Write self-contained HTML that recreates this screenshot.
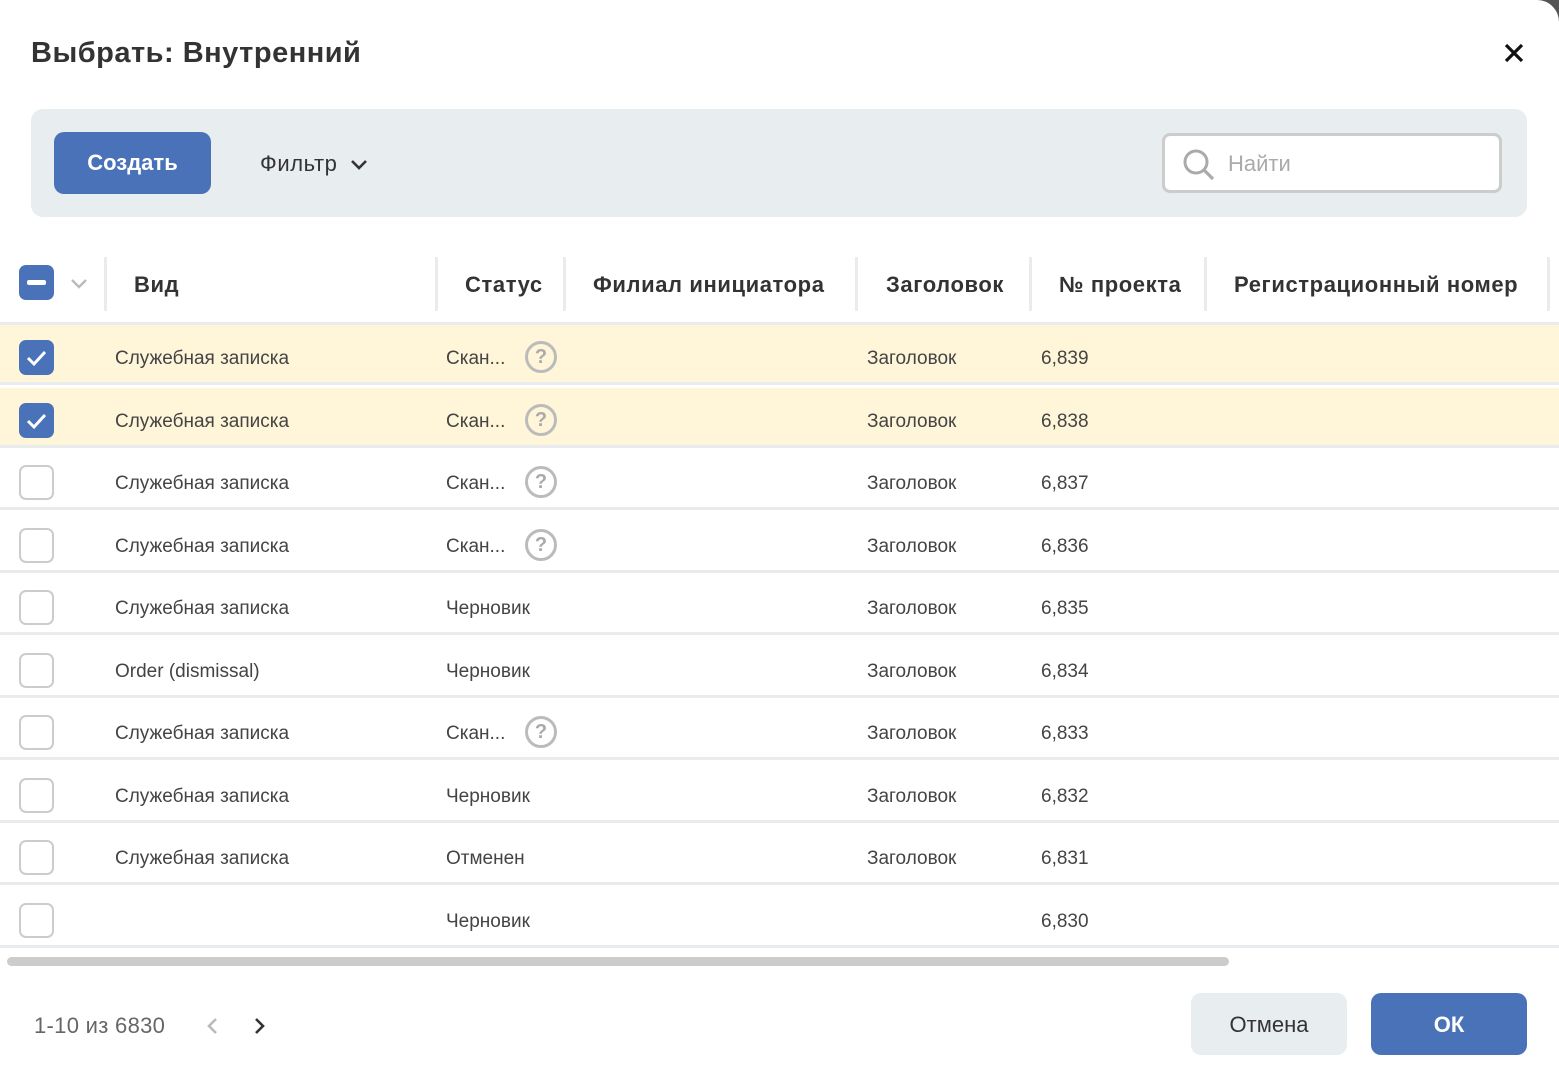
<!DOCTYPE html>
<html><head><meta charset="utf-8"><style>
*{box-sizing:border-box;margin:0;padding:0}
html,body{width:1559px;height:1083px;overflow:hidden;background:#555}
body{font-family:"Liberation Sans",sans-serif;color:#333}
.m{position:absolute;left:0;top:0;width:1559px;height:1083px;background:#fff;border-radius:0 22px 0 0}
.t{position:absolute;left:31px;top:37px;font-size:29px;font-weight:bold;color:#333;letter-spacing:0.5px}
.x{position:absolute;left:1503px;top:42px}
.bar{position:absolute;left:31px;top:109px;width:1496px;height:108px;background:#e8edf0;border-radius:12px}
.btn{position:absolute;left:54px;top:132px;width:157px;height:62px;background:#4a72b8;border-radius:10px;color:#fff;font-size:22px;font-weight:bold;text-align:center;line-height:62px}
.flt{position:absolute;left:260px;top:151px;font-size:22px;color:#333;letter-spacing:0.6px}
.srch{position:absolute;left:1162px;top:133px;width:340px;height:60px;border:3px solid #ccc;border-radius:8px;background:#fff}
.srch span{position:absolute;left:63px;top:15px;font-size:22px;color:#aaa}
.hd{position:absolute;top:272px;font-size:22px;font-weight:bold;color:#333;letter-spacing:0.6px}
.sep{position:absolute;top:257px;width:3px;height:54px;background:#e8ecef}
.row{position:absolute;left:0;width:1559px;height:60px;border-bottom:3px solid #e8ecef;font-size:19px;color:#444}
.row div{position:absolute;top:23px}
.sel{background:#fff5d8}
.cb{position:absolute;left:19px;top:15px!important;width:35px;height:35px;border:2px solid #ccc;border-radius:7px;background:#fff}
.cb.on{background:#4a72b8;border-color:#4a72b8}
.q{position:absolute;left:525px;top:16px!important;width:32px;height:32px;border:3px solid #bbb;border-radius:50%;color:#aaa;font-size:20px;text-align:center;line-height:27px;font-weight:bold}
.sb{position:absolute;left:7px;top:957px;width:1222px;height:9px;background:#ccc;border-radius:5px}
.pg{position:absolute;left:34px;top:1013px;font-size:22px;color:#666;letter-spacing:0.3px}
.cn{position:absolute;left:1191px;top:993px;width:156px;height:62px;background:#e8edf0;border-radius:10px;font-size:22px;text-align:center;line-height:64px;color:#333}
.ok{position:absolute;left:1371px;top:993px;width:156px;height:62px;background:#4a72b8;border-radius:10px;font-size:22px;text-align:center;line-height:64px;color:#fff;font-weight:bold}
</style></head><body><div class="m">
<div class="t">Выбрать: Внутренний</div>
<svg class="x" width="22" height="22" viewBox="0 0 22 22"><path d="M3 3L19 19M19 3L3 19" stroke="#111" stroke-width="3.2"/></svg>
<div class="bar"></div>
<div class="btn">Создать</div>
<div class="flt">Фильтр <svg width="18" height="12" viewBox="0 0 18 12" style="margin-left:6px"><path d="M2 2l7 7 7-7" stroke="#333" stroke-width="2.6" fill="none"/></svg></div>
<div class="srch"><svg style="position:absolute;left:17px;top:12px" width="34" height="34" viewBox="0 0 34 34"><circle cx="14" cy="14" r="11" stroke="#aaa" stroke-width="3" fill="none"/><path d="M22 22l9 9" stroke="#aaa" stroke-width="3.2"/></svg><span>Найти</span></div>
<div style="position:absolute;left:19px;top:265px;width:35px;height:35px;background:#4a72b8;border-radius:7px"><div style="position:absolute;left:8px;top:15px;width:19px;height:5px;background:#fff;border-radius:2px"></div></div>
<svg style="position:absolute;left:70px;top:278px" width="18" height="12" viewBox="0 0 18 12"><path d="M2 2l7 7 7-7" stroke="#bbb" stroke-width="2.4" fill="none"/></svg>
<div class="sep" style="left:104px"></div>
<div class="hd" style="left:134px">Вид</div>
<div class="sep" style="left:435px"></div>
<div class="hd" style="left:465px">Статус</div>
<div class="sep" style="left:563px"></div>
<div class="hd" style="left:593px">Филиал инициатора</div>
<div class="sep" style="left:855px"></div>
<div class="hd" style="left:886px">Заголовок</div>
<div class="sep" style="left:1029px"></div>
<div class="hd" style="left:1059px">№ проекта</div>
<div class="sep" style="left:1204px"></div>
<div class="hd" style="left:1234px">Регистрационный номер</div>
<div class="sep" style="left:1547px"></div>
<div style="position:absolute;left:0;top:322px;width:1559px;height:3px;background:#e8ecef"></div>
<div class="row sel" style="top:325px"><div class="cb on"><svg width="31" height="31" viewBox="0 0 31 31"><path d="M7 16l6 6 11-12" stroke="#fff" stroke-width="3" fill="none"/></svg></div><div style="left:115px">Служебная записка</div><div style="left:446px">Скан...</div><div class="q">?</div><div style="left:867px">Заголовок</div><div style="left:1041px">6,839</div></div>
<div class="row sel" style="top:388px"><div class="cb on"><svg width="31" height="31" viewBox="0 0 31 31"><path d="M7 16l6 6 11-12" stroke="#fff" stroke-width="3" fill="none"/></svg></div><div style="left:115px">Служебная записка</div><div style="left:446px">Скан...</div><div class="q">?</div><div style="left:867px">Заголовок</div><div style="left:1041px">6,838</div></div>
<div class="row" style="top:450px"><div class="cb"></div><div style="left:115px">Служебная записка</div><div style="left:446px">Скан...</div><div class="q">?</div><div style="left:867px">Заголовок</div><div style="left:1041px">6,837</div></div>
<div class="row" style="top:513px"><div class="cb"></div><div style="left:115px">Служебная записка</div><div style="left:446px">Скан...</div><div class="q">?</div><div style="left:867px">Заголовок</div><div style="left:1041px">6,836</div></div>
<div class="row" style="top:575px"><div class="cb"></div><div style="left:115px">Служебная записка</div><div style="left:446px">Черновик</div><div style="left:867px">Заголовок</div><div style="left:1041px">6,835</div></div>
<div class="row" style="top:638px"><div class="cb"></div><div style="left:115px">Order (dismissal)</div><div style="left:446px">Черновик</div><div style="left:867px">Заголовок</div><div style="left:1041px">6,834</div></div>
<div class="row" style="top:700px"><div class="cb"></div><div style="left:115px">Служебная записка</div><div style="left:446px">Скан...</div><div class="q">?</div><div style="left:867px">Заголовок</div><div style="left:1041px">6,833</div></div>
<div class="row" style="top:763px"><div class="cb"></div><div style="left:115px">Служебная записка</div><div style="left:446px">Черновик</div><div style="left:867px">Заголовок</div><div style="left:1041px">6,832</div></div>
<div class="row" style="top:825px"><div class="cb"></div><div style="left:115px">Служебная записка</div><div style="left:446px">Отменен</div><div style="left:867px">Заголовок</div><div style="left:1041px">6,831</div></div>
<div class="row" style="top:888px"><div class="cb"></div><div style="left:446px">Черновик</div><div style="left:1041px">6,830</div></div>
<div class="sb"></div>
<div class="pg">1-10 из 6830</div>
<svg style="position:absolute;left:205px;top:1017px" width="14" height="18" viewBox="0 0 14 18"><path d="M11 2L4 9l7 7" stroke="#bbb" stroke-width="2.6" fill="none"/></svg>
<svg style="position:absolute;left:253px;top:1017px" width="14" height="18" viewBox="0 0 14 18"><path d="M3 2l7 7-7 7" stroke="#333" stroke-width="2.6" fill="none"/></svg>
<div class="cn">Отмена</div>
<div class="ok">ОК</div>
</div></body></html>
